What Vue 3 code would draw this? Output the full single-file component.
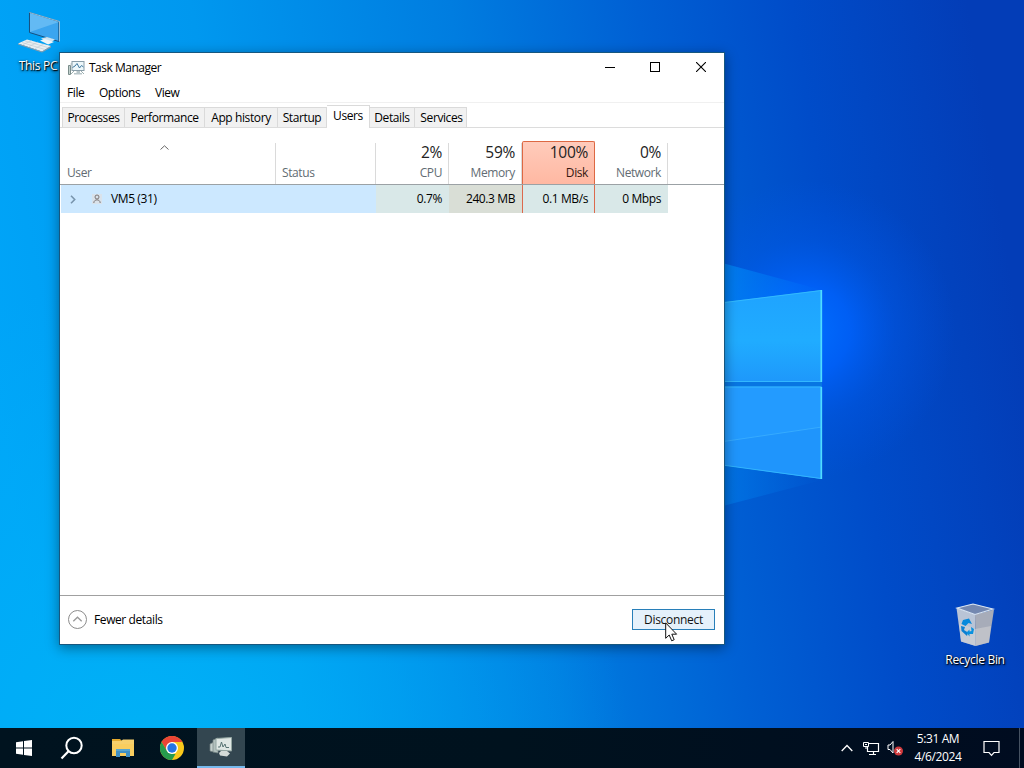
<template>
  <div class="desktop">
    <svg class="wallpaper" viewBox="0 0 1024 728" preserveAspectRatio="none">
      <defs>
        <linearGradient id="base" gradientUnits="userSpaceOnUse" x1="0" y1="430" x2="1010" y2="270">
          <stop offset="0" stop-color="#00a5f8" />
          <stop offset="0.25" stop-color="#0098ef" />
          <stop offset="0.5" stop-color="#007de0" />
          <stop offset="0.68" stop-color="#0060d4" />
          <stop offset="0.83" stop-color="#004cc9" />
          <stop offset="1" stop-color="#033db7" />
        </linearGradient>
        <radialGradient id="glow" gradientUnits="userSpaceOnUse" cx="805" cy="330" r="150">
          <stop offset="0" stop-color="#006eff" />
          <stop offset="0.3" stop-color="#0062fc" stop-opacity="0.85" />
          <stop offset="0.6" stop-color="#005aec" stop-opacity="0.4" />
          <stop offset="1" stop-color="#0055e6" stop-opacity="0" />
        </radialGradient>
        <radialGradient id="corner" gradientUnits="userSpaceOnUse" cx="150" cy="760" r="480">
          <stop offset="0" stop-color="#00b2f6" />
          <stop offset="1" stop-color="#00aef8" stop-opacity="0" />
        </radialGradient>
        <linearGradient id="paneTop" x1="0" y1="0" x2="0" y2="1">
          <stop offset="0" stop-color="#1fa3ff" />
          <stop offset="0.55" stop-color="#20acff" />
          <stop offset="1" stop-color="#1e98fb" />
        </linearGradient>
        <linearGradient id="beam" x1="0" y1="0" x2="1" y2="0">
          <stop offset="0" stop-color="#009bff" stop-opacity="0.7" />
          <stop offset="1" stop-color="#008cff" stop-opacity="0" />
        </linearGradient>
      </defs>
      <rect width="1024" height="728" fill="url(#base)" />
      <rect width="1024" height="728" fill="url(#corner)" />
      <circle cx="805" cy="330" r="150" fill="url(#glow)" />
      <path d="M700 257 L822 290 L700 310Z" fill="url(#beam)" />
      <path d="M700 460 L822 480 L700 512Z" fill="url(#beam)" opacity="0.6" />
      <path d="M700 305 L822 290 V479 L700 462Z" fill="#0876e2" />
      <path d="M700 305 L822 290 V382 H700Z" fill="url(#paneTop)" />
      <path d="M700 386.500 H822 V479 L700 462Z" fill="#239bff" />
      <path d="M700 445 L822 427 V479 L700 462Z" fill="#1789f5" opacity="0.3" />
      <path d="M700 445 L822 427" stroke="#45b8ff" stroke-width="1" opacity="0.6" />
      <path d="M700 305.500 L821 290.500 M700 381.500 H821 M700 387 H821 M700 462 L821 478.500" stroke="#3cc4ff" fill="none" opacity="0.7" />
      <path d="M821.300 290 V382 M821.300 387 V479" stroke="#4fdcff" stroke-width="1.700" />
    </svg>

    <div class="shortcut pc">
      <svg width="48" height="44" viewBox="0 0 48 44">
        <path d="M15.500 2.500 L45.500 11.500 V31.500 L15.500 22.500Z" transform="translate(14.500 0) scale(0.98 1) translate(-14.500 0)" fill="#3ba5ef" stroke="#174f7d" stroke-width="1" />
        <path d="M16 3 L45 12 L16 22Z" fill="#8bd0fa" opacity="0.5" />
        <path d="M15.500 2.500 L45.500 11.500 V31.500" stroke="#a4c7de" fill="none" stroke-width="0.900" />
        <path d="M27 28.500 L33 27 L41 29.500 L35 33.500Z" fill="#cfe4f1" />
        <path d="M26 30.500 L31 29 L40 32 L34 34.500Z" fill="#eff4f7" />
        <path d="M4 33.500 L13 29.500 L37 36 L28 41.500Z" fill="#e9eef1" />
        <path d="M4 33.500 L28 41.500 L37 36 V37.500 L28 42.500 L4 34.500Z" fill="#8c9ba8" />
        <path d="M8 32.500 L31 39.500 M11 31 L34 37.500 M9 34.500 L18 30.500 M15 36.500 L24 32 M21 38.500 L30 34" stroke="#bcc7d0" stroke-width="0.600" />
      </svg>
      <span class="shortcut-label">This PC</span>
    </div>

    <div class="shortcut bin">
      <svg width="48" height="46" viewBox="0 0 48 46">
        <path d="M5.500 6 L24 12.500 L24.500 44 L10 39.500Z" fill="#b9c4d6" />
        <path d="M24 12.500 L43 7.500 L38 40.500 L24.500 44Z" fill="#a7acb9" />
        <path d="M6 6 L22 2 L42 7 L24 12.500Z" fill="#7488b0" stroke="#dce7f2" stroke-width="1.100" />
        <path d="M8 21 L24 27 L40 24 L38 40.500 L24.500 44 L10 39.500Z" fill="#d4d4d6" opacity="0.55" />
        <path d="M12 18 L18 16.500 L21 22 L17.500 21 L14.500 24 L10.500 22Z" fill="#0689dc" />
        <path d="M10 24 L14 25 L13 28 L17 30.500 L16 34 L10.500 29Z" fill="#0b80d3" />
        <path d="M20 25 L23 27 L22 32 L18.500 32 V34.500 L15.500 30.500 L18.500 27.500 V29.500 L20.500 29Z" fill="#0a91df" />
      </svg>
      <span class="shortcut-label">Recycle Bin</span>
    </div>

    <div class="window">
      <header class="titlebar">
        <svg class="app-icon" width="17" height="16" viewBox="0 0 17 16">
          <path d="M0.500 5.500 H2.500 V14.500 H0.500Z" fill="#c3d2cf" stroke="#7a8d8b" />
          <rect x="4" y="1.500" width="12" height="9" fill="#edf7fa" stroke="#899da8" />
          <path d="M4.500 7.500 L7 6 L9 3.500 L11.500 8 L13.500 5.500 L15.500 7" stroke="#3f789e" fill="none" />
          <path d="M8.500 11 H12 V13 H14 V14.500 H6 V13 H8.500Z" fill="#b7c5c9" />
          <path d="M2.500 4 H4 M3 14 L6 11 M13 11 L16 14" stroke="#9cafb0" />
        </svg>
        <span class="title">Task Manager</span>
        <div class="controls">
          <svg width="10" height="10" viewBox="0 0 10 10"><path d="M0 5.500 H10" stroke="#000" /></svg>
          <svg width="10" height="10" viewBox="0 0 10 10"><rect x="0.500" y="0.500" width="9" height="9" stroke="#000" fill="none" /></svg>
          <svg width="10" height="10" viewBox="0 0 10 10"><path d="M0 0 L10 10 M10 0 L0 10" stroke="#000" stroke-width="1.100" /></svg>
        </div>
      </header>

      <nav class="menubar">
        <span v-for="item in menus" :key="item">{{ item }}</span>
      </nav>

      <div class="tabs">
        <div
          v-for="tab in tabs"
          :key="tab.name"
          class="tab"
          :class="{ active: tab.name === activeTab }"
          :style="{ width: tab.width + 'px' }"
        >{{ tab.name }}</div>
      </div>

      <main class="content">
        <div class="grid head">
          <div class="cell user">
            <svg class="sort" width="9" height="5" viewBox="0 0 9 5"><path d="M0.500 4.500 L4.500 0.800 L8.500 4.500" stroke="#666" fill="none" /></svg>
            <span>User</span>
          </div>
          <div class="cell status"><span>Status</span></div>
          <div
            v-for="col in columns"
            :key="col.label"
            class="cell metric"
            :class="{ hot: col.hot }"
          >
            <span class="percent">{{ col.total }}</span>
            <span>{{ col.label }}</span>
          </div>
        </div>
        <div class="grid row">
          <div class="cell user">
            <svg class="expand" width="6" height="9" viewBox="0 0 6 9"><path d="M1 0.700 L4.700 4.500 L1 8.300" stroke="#7895ad" stroke-width="1.600" fill="none" /></svg>
            <svg class="person" width="10" height="10" viewBox="0 0 10 10">
              <rect width="10" height="10" fill="#dedfe3" opacity="0.7" />
              <circle cx="5" cy="3" r="2" stroke="#7d7777" fill="none" />
              <path d="M1.800 9 C1.800 4.800 8.200 4.800 8.200 9" stroke="#7d7777" fill="none" />
            </svg>
            <span>VM5 (31)</span>
          </div>
          <div class="cell status"></div>
          <div
            v-for="col in columns"
            :key="col.label"
            class="cell metric"
            :class="{ hot: col.hot, warm: col.warm }"
          >{{ col.value }}</div>
        </div>
      </main>

      <footer class="footer">
        <svg width="20" height="20" viewBox="0 0 20 20">
          <circle cx="9.500" cy="9.500" r="9" stroke="#8c8c8c" fill="none" />
          <path d="M5.300 11.300 L9.500 7.200 L13.700 11.300" stroke="#999" stroke-width="1.300" fill="none" />
        </svg>
        <span class="fewer">Fewer details</span>
        <button class="disconnect">Disconnect</button>
      </footer>
    </div>

    <svg class="cursor" width="13" height="20" viewBox="0 0 13 20">
      <path d="M0.700 0.900 V16.300 L4.200 13 L6.700 18.800 L9.200 17.700 L6.800 12.200 H11.600Z" fill="#fff" stroke="#111" stroke-width="1" />
    </svg>

    <div class="taskbar">
      <div class="task">
        <svg width="16" height="16" viewBox="0 0 16 16"><path d="M0 2.200 L7 1.200 V7.500 H0Z M8 1 L16 0 V7.500 H8Z M0 8.500 H7 V14.800 L0 13.800Z M8 8.500 H16 V16 L8 15Z" fill="#fff" /></svg>
      </div>
      <div class="task">
        <svg width="24" height="24" viewBox="0 0 24 24"><circle cx="14" cy="9.500" r="7.700" stroke="#fff" stroke-width="2" fill="none" /><path d="M8.500 15.300 L1.500 22.500" stroke="#fff" stroke-width="2.200" /></svg>
      </div>
      <div class="task">
        <svg width="22" height="20" viewBox="0 0 22 20">
          <path d="M0 1 H8 L10 3 H21 V18 H0Z" fill="#e5aa2d" />
          <path d="M0 5 H22 V18 H0Z" fill="#f9cd5f" />
          <path d="M0 3 H9 L11 1.500 H22 V6 H0Z" fill="#f7d06c" />
          <path d="M4 11 H18 V19 H14 V15 H8 V19 H4Z" fill="#3f8fc4" />
          <path d="M4 11 H18 V13 H4Z" fill="#58a5cf" />
        </svg>
      </div>
      <div class="task">
        <svg width="24" height="24" viewBox="0 0 24 24">
          <circle cx="12" cy="12" r="12" fill="#f9c81b" />
          <path d="M1.600 6 A12 12 0 0 1 22.400 6 H12 L7 15Z" fill="#ea4436" />
          <path d="M1.600 6 L7 15 L12 18 H15.500 L12 24 A12 12 0 0 1 1.600 6Z" fill="#269b4d" />
          <circle cx="12" cy="12" r="6" fill="#fff" />
          <circle cx="12" cy="12" r="4.700" fill="#2575e4" />
        </svg>
      </div>
      <div class="task current">
        <svg width="24" height="22" viewBox="0 0 24 22">
          <path d="M1 8 L5 6 V16 L1 15Z" fill="#c4cfcc" stroke="#718080" stroke-width="0.700" />
          <path d="M4 4 L9 2 V17 L4 16Z" fill="#b2c0bd" stroke="#758584" stroke-width="0.700" />
          <path d="M7 2.500 L22.500 1.500 V15 L7 14Z" fill="#dfe7e4" stroke="#94a6a2" />
          <path d="M9 11 H11 L12.500 6 L14 11 L16 8 L17 11.500 H20" stroke="#587474" fill="none" />
          <path d="M12 15 H18 L21 17.500 L18 20.500 L11 19.500 L10 17Z" fill="#d5dbd8" />
        </svg>
      </div>

      <div class="tray">
        <svg class="chevron" width="12" height="8" viewBox="0 0 12 8"><path d="M0.700 7 L6 1.500 L11.300 7" stroke="#fff" stroke-width="1.300" fill="none" /></svg>
        <svg class="network" width="17" height="15" viewBox="0 0 17 15">
          <path d="M6 2.500 H15.500 V10.500 H4.500 V6 M10.500 10.500 V13.500 M6 13.500 H13" stroke="#fff" stroke-width="1.200" fill="none" />
          <path d="M0.500 1.500 H5.500 V5.500 H0.500Z M2 3.500 H4 M3 5.500 V8" stroke="#fff" fill="none" />
        </svg>
        <svg class="volume" width="17" height="16" viewBox="0 0 17 16">
          <path d="M1 5 H3 L6 1.500 V13 L3 9.500 H1Z" stroke="#fff" fill="none" />
          <circle cx="11.500" cy="11" r="4.500" fill="#cf3a3d" />
          <path d="M9.700 9.200 L13.300 12.800 M13.300 9.200 L9.700 12.800" stroke="#fff" stroke-width="1.200" />
        </svg>
        <div class="clock">
          <span>5:31 AM</span>
          <span>4/6/2024</span>
        </div>
        <svg class="notice" width="17" height="17" viewBox="0 0 17 17"><path d="M1 1.500 H16 V12.500 H11 L8.500 15.300 L6 12.500 H1Z" stroke="#fff" stroke-width="1.200" fill="none" /></svg>
        <div class="peek"></div>
      </div>
    </div>
  </div>
</template>

<script setup>
const menus = ['File', 'Options', 'View']
const activeTab = 'Users'

const tabs = [
  { name: 'Processes', width: 63 },
  { name: 'Performance', width: 80 },
  { name: 'App history', width: 73 },
  { name: 'Startup', width: 49 },
  { name: 'Users', width: 43 },
  { name: 'Details', width: 45 },
  { name: 'Services', width: 52 }
]

const columns = [
  { label: 'CPU', total: '2%', value: '0.7%' },
  { label: 'Memory', total: '59%', value: '240.3 MB', warm: true },
  { label: 'Disk', total: '100%', value: '0.1 MB/s', hot: true },
  { label: 'Network', total: '0%', value: '0 Mbps' }
]
</script>

<style>
body {
  margin: 0;
  overflow: hidden;
}
</style>

<style scoped>
.desktop {
  position: relative;
  width: 1024px;
  height: 768px;
  overflow: hidden;
  font-family: "Open Sans", "Noto Sans", sans-serif;
  font-size: 12px;
  line-height: 16px;
  letter-spacing: -0.4px;
  color: #000;
  white-space: nowrap;
}

.desktop *,
.desktop {
  box-sizing: border-box;
}

svg {
  display: block;
  flex-shrink: 0;
}

.wallpaper {
  position: absolute;
  top: 0;
  left: 0;
  width: 1024px;
  height: 728px;
}

.shortcut {
  position: absolute;
  display: flex;
  flex-direction: column;
  align-items: center;
  width: 76px;
  color: #fff;
  text-shadow: 1px 1px 1px #000, 0 1px 3px #000;
}

.pc {
  top: 10px;
  left: 0;
}

.bin {
  top: 602px;
  left: 937px;
}

.shortcut-label {
  margin-top: 4px;
  letter-spacing: -0.3px;
}

.window {
  position: absolute;
  top: 52px;
  left: 59px;
  width: 666px;
  height: 593px;
  display: flex;
  flex-direction: column;
  background: #fff;
  border: 1px solid #17577f;
  box-shadow: 0 3px 12px rgba(0, 0, 0, 0.4);
}

.titlebar {
  display: flex;
  align-items: center;
  height: 30px;
  padding-left: 8px;
}

.title {
  margin-left: 4px;
  letter-spacing: -0.5px;
}

.controls {
  display: flex;
  gap: 36px;
  margin-left: auto;
  padding: 0 18px 2px 0;
}

.controls svg:first-child {
  margin-right: -1px;
}

.menubar {
  display: flex;
  gap: 14.5px;
  height: 20px;
  padding: 2px 7px 0;
  border-bottom: 1px solid #f0f0f0;
}

.tabs {
  display: flex;
  align-items: flex-end;
  height: 25px;
  padding-left: 2px;
  border-bottom: 1px solid #dcdcdc;
}

.tab {
  height: 20px;
  padding-top: 2px;
  text-align: center;
  background: #f1f1f1;
  border: 1px solid #dadada;
  border-left: none;
  border-bottom: none;
}

.tab:first-child {
  border-left: 1px solid #dadada;
}

.tab:last-child {
  padding-left: 2px;
}

.tab.active {
  height: 23px;
  margin-bottom: -1px;
  background: #fff;
}

.content {
  flex: 1;
  padding-top: 13px;
}

.grid {
  display: grid;
  grid-template-columns: 216px 100px repeat(4, 73px);
}

.head {
  height: 44px;
  color: #626c73;
  border-bottom: 1px solid #9ba1a5;
}

.head .cell {
  display: flex;
  flex-direction: column;
  justify-content: flex-end;
  height: 41px;
  margin-top: 2px;
  padding: 0 6px 3px 7px;
  border-right: 1px solid #dadada;
}

.head .metric {
  align-items: flex-end;
  padding-left: 0;
}

.head .sort {
  margin: 0 0 15px 93px;
}

.head .status {
  padding-left: 6px;
}

.percent {
  margin-bottom: 5px;
  font-size: 15.5px;
  letter-spacing: -0.3px;
  color: #222;
}

.head .hot {
  height: 43px;
  margin: 0;
  color: #351810;
  background: linear-gradient(#ffcbbb, #ffb8a2);
  border: 1px solid #dd6843;
  border-bottom: none;
  border-radius: 2px 2px 0 0;
}

.row {
  width: 607px;
  height: 28px;
  margin-left: 1px;
  grid-template-columns: 215px 100px repeat(4, 73px);
  background: #cce8ff;
}

.row .cell {
  display: flex;
  align-items: center;
}

.row .user {
  padding-left: 9px;
}

.person {
  margin: 0 9px 0 16px;
}

.row .metric {
  justify-content: flex-end;
  padding-right: 7px;
  background: #d9e8e8;
}

.row .warm {
  background: #d9ded6;
}

.row .hot {
  padding-right: 6px;
  border: 1px solid #dc694d;
  border-top: none;
  border-bottom: none;
}

.footer {
  display: flex;
  align-items: center;
  height: 49px;
  padding: 0 9px 1px 8px;
  border-top: 1px solid #a0a0a0;
}

.fewer {
  margin-left: 6px;
}

.disconnect {
  width: 83px;
  height: 21px;
  margin-left: auto;
  padding: 0;
  font: inherit;
  letter-spacing: -0.3px;
  line-height: 18px;
  color: #111;
  background: #e5f1fb;
  border: 1px solid #287fb9;
}

.cursor {
  position: absolute;
  top: 622px;
  left: 665px;
}

.taskbar {
  position: absolute;
  right: 0;
  bottom: 0;
  left: 0;
  display: flex;
  height: 40px;
  background: linear-gradient(90deg, #00131f, #00121e 50%, #000c20);
}

.task {
  display: flex;
  align-items: center;
  justify-content: center;
  width: 50px;
}

.task:first-child,
.task:nth-child(2) {
  width: 48px;
}

.task:nth-child(3) {
  width: 53px;
}

.task:nth-child(4) {
  width: 48px;
  padding-right: 2px;
}

.task.current {
  width: 48px;
  background: #334650;
  border-bottom: 2px solid #76b9ed;
}

.tray {
  display: flex;
  align-items: center;
  margin-left: auto;
  color: #fff;
}

.network {
  margin-left: 10px;
}

.volume {
  margin-left: 7px;
}

.clock {
  display: flex;
  flex-direction: column;
  align-items: center;
  width: 52px;
  margin: 0 19px 0 8px;
  line-height: 18px;
}

.peek {
  width: 5px;
  height: 40px;
  margin-left: 19px;
  border-left: 1px solid #465262;
}
</style>
